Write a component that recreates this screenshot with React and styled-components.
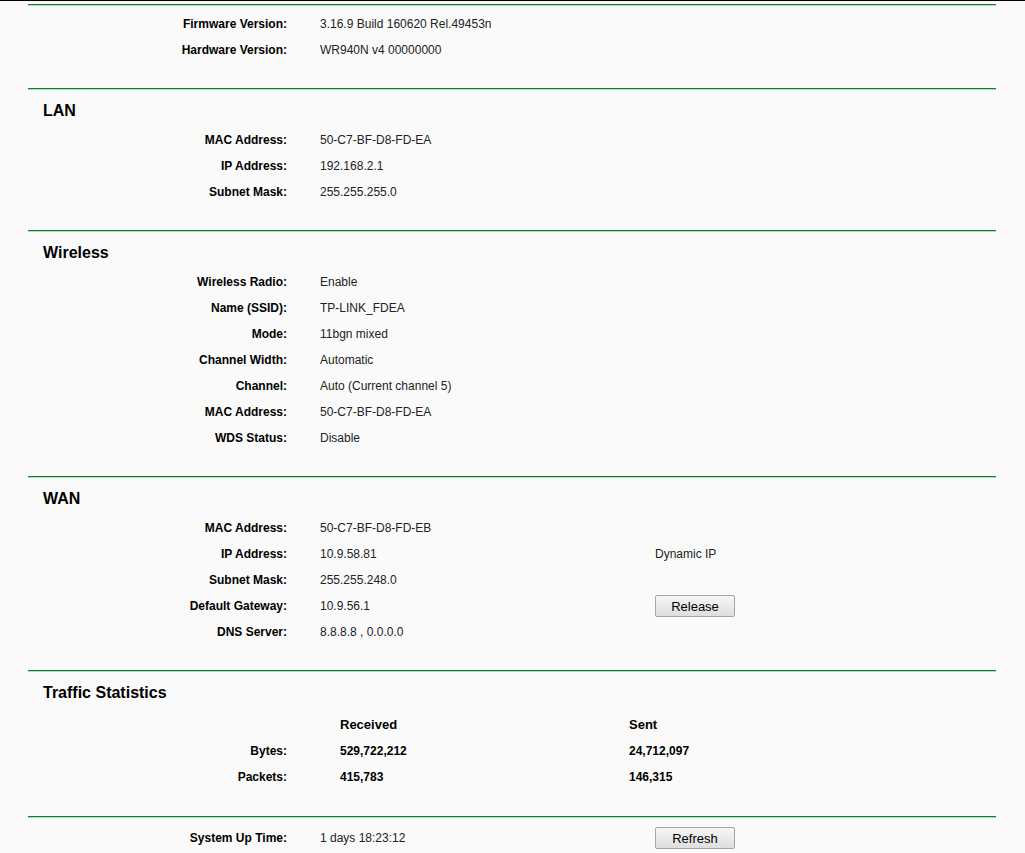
import React from "react";
import styled, { createGlobalStyle } from "styled-components";

const GlobalStyle = createGlobalStyle`
  html, body {
    margin: 0;
    padding: 0;
    background: #fafafa;
  }
  body {
    border-top: 1px solid #000;
    font-family: "Liberation Sans", Arial, sans-serif;
    font-size: 12px;
    color: #000;
  }
`;

const sections = [
  {
    rows: [
      ["Firmware Version:", "3.16.9 Build 160620 Rel.49453n"],
      ["Hardware Version:", "WR940N v4 00000000"],
    ],
  },
  {
    title: "LAN",
    rows: [
      ["MAC Address:", "50-C7-BF-D8-FD-EA"],
      ["IP Address:", "192.168.2.1"],
      ["Subnet Mask:", "255.255.255.0"],
    ],
  },
  {
    title: "Wireless",
    rows: [
      ["Wireless Radio:", "Enable"],
      ["Name (SSID):", "TP-LINK_FDEA"],
      ["Mode:", "11bgn mixed"],
      ["Channel Width:", "Automatic"],
      ["Channel:", "Auto (Current channel 5)"],
      ["MAC Address:", "50-C7-BF-D8-FD-EA"],
      ["WDS Status:", "Disable"],
    ],
  },
  {
    title: "WAN",
    rows: [
      ["MAC Address:", "50-C7-BF-D8-FD-EB"],
      ["IP Address:", "10.9.58.81", "Dynamic IP"],
      ["Subnet Mask:", "255.255.248.0"],
      ["Default Gateway:", "10.9.56.1", { button: "Release" }],
      ["DNS Server:", "8.8.8.8 , 0.0.0.0"],
    ],
  },
];

const traffic = [
  ["Bytes:", "529,722,212", "24,712,097"],
  ["Packets:", "415,783", "146,315"],
];

export default function App() {
  return (
    <>
      <GlobalStyle />
      <Page>
        {sections.map((s, i) => (
          <Section key={i} $top={i === 0 ? 5 : 11} $bottom={25}>
            {s.title && <Title>{s.title}</Title>}
            {s.rows.map(([label, value, extra]) => (
              <Row key={label}>
                <Label>{label}</Label>
                <Value>{value}</Value>
                <Value>
                  {extra && typeof extra === "object" ? (
                    <Button>{extra.button}</Button>
                  ) : (
                    extra
                  )}
                </Value>
              </Row>
            ))}
          </Section>
        ))}
        <Section $top={11} $bottom={26}>
          <Title>Traffic Statistics</Title>
          <TrafficRow $head>
            <Label />
            <StatCell>Received</StatCell>
            <StatCell>Sent</StatCell>
          </TrafficRow>
          {traffic.map(([label, rec, sent]) => (
            <TrafficRow key={label}>
              <Label>{label}</Label>
              <StatCell>{rec}</StatCell>
              <StatCell>{sent}</StatCell>
            </TrafficRow>
          ))}
        </Section>
        <Section $top={7} $bottom={4}>
          <Row>
            <Label>System Up Time:</Label>
            <Value>1 days 18:23:12</Value>
            <Value>
              <Button>Refresh</Button>
            </Value>
          </Row>
        </Section>
      </Page>
    </>
  );
}

const Page = styled.div`
  width: 968px;
  margin-left: 28px;
  padding-top: 3px;
`;

const Section = styled.section`
  border-top: 1px solid #107a38;
  box-shadow: inset 0 1px 0 #b3dbbd;
  padding-top: ${(p) => p.$top + 1}px;
  padding-bottom: ${(p) => p.$bottom}px;
`;

const Title = styled.h2`
  margin: 0 0 6px 0;
  padding-left: 15px;
  font-size: 16px;
  line-height: 20px;
  font-weight: bold;
  color: #000;
`;

const Row = styled.div`
  display: grid;
  grid-template-columns: 259px 335px 1fr;
  height: 26px;
  align-items: center;
`;

const Label = styled.div`
  text-align: right;
  font-weight: bold;
  color: #000;
  white-space: nowrap;
`;

const Value = styled.div`
  padding-left: 33px;
  color: #222;
  white-space: nowrap;
`;

const TrafficRow = styled.div`
  display: grid;
  grid-template-columns: 259px 289px 1fr;
  height: 26px;
  align-items: center;
  padding-top: ${(p) => (p.$head ? 2 : 0)}px;
  margin-bottom: ${(p) => (p.$head ? 1 : 0)}px;
  font-size: ${(p) => (p.$head ? 13 : 12)}px;
`;

const StatCell = styled.div`
  padding-left: 53px;
  font-weight: bold;
  color: #000;
`;

const Button = styled.button`
  width: 80px;
  height: 22px;
  padding: 0;
  border: 1px solid #a6a6a6;
  border-radius: 2px;
  background: linear-gradient(#f6f6f6, #dedede);
  font-family: "Liberation Sans", Arial, sans-serif;
  font-size: 13px;
  color: #000;
  display: block;
`;
